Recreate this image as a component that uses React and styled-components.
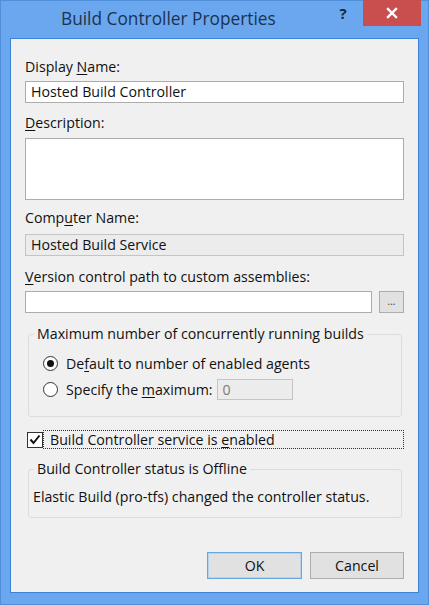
import React from "react";
import styled, { createGlobalStyle } from "styled-components";

const Global = createGlobalStyle`
  html, body { margin: 0; padding: 0; }
  body { background: #6aa7ee; font-family: "Open Sans", "Noto Sans", sans-serif; }
  * { box-sizing: border-box; }
`;

const Frame = styled.div`
  width: 429px;
  height: 605px;
  background: #6aa7ee;
  border: 1px solid #4f8fdc;
  display: flex;
  flex-direction: column;
  padding: 0 9px 11px 9px;
`;

const TitleBar = styled.div`
  height: 37px;
  display: flex;
  align-items: flex-start;
`;

const Title = styled.div`
  margin-left: 51px;
  margin-top: 6px;
  font-size: 17.3px;
  color: #1b3350;
`;

const HelpBtn = styled.div`
  margin-left: auto;
  margin-top: 2px;
  width: 24px;
  font-weight: 700;
  font-size: 15px;
  color: #17263a;
  text-align: center;
`;

const CloseBtn = styled.div`
  margin-left: 8px;
  margin-right: -2px;
  margin-top: -1px;
  width: 58px;
  height: 26px;
  background: #c94e4e;
  display: flex;
  align-items: center;
  justify-content: center;
`;

const Client = styled.div`
  flex: 1;
  background: #f0f0f0;
  border: 1px solid #3e82d6;
  display: flex;
  flex-direction: column;
  padding: 0 14px 13px 14px;
  font-size: 14.2px;
  color: #111;
`;

const Label = styled.div`
  height: 18px;
  line-height: 18px;
  margin-top: ${(p) => p.$mt || 0}px;
  margin-bottom: ${(p) => p.$mb || 5}px;
  white-space: nowrap;
`;

const U = styled.span`
  text-decoration: underline;
  text-underline-offset: 2px;
`;

const TextBox = styled.div`
  height: ${(p) => p.$h || 22}px;
  border: 1px solid ${(p) => (p.$disabled ? "#c4c4c4" : "#acacac")};
  background: ${(p) => (p.$disabled ? "#ececec" : "#fff")};
  padding: 0 5px;
  line-height: 20px;
  flex: ${(p) => (p.$grow ? 1 : "none")};
  width: ${(p) => (p.$w ? p.$w + "px" : "auto")};
  color: ${(p) => (p.$muted ? "#7a7a7a" : "#111")};
  white-space: nowrap;
`;

const Row = styled.div`
  display: flex;
  align-items: center;
  gap: ${(p) => p.$gap || 0}px;
  margin-top: ${(p) => p.$mt || 0}px;
`;

const SmallButton = styled.div`
  width: 25px;
  height: 22px;
  border: 1px solid #adadad;
  background: #e1e1e1;
  font-size: 10px;
  line-height: 18px;
  text-align: center;
  color: #333;
`;

const Group = styled.div`
  margin: ${(p) => p.$mt}px 2px 0 3px;
  border: 1px solid #dcdcdc;
  border-radius: 3px;
  display: flex;
  flex-direction: column;
  align-items: flex-start;
  padding: 0 0 ${(p) => p.$pb}px ${(p) => p.$pl}px;
`;

const Legend = styled.div`
  margin-top: -10px;
  margin-left: ${(p) => p.$ml}px;
  padding: 0 3px;
  background: #f0f0f0;
  height: 18px;
  line-height: 18px;
  white-space: nowrap;
`;

const RadioRow = styled.label`
  display: flex;
  align-items: center;
  height: ${(p) => p.$h || 20}px;
  margin-top: ${(p) => p.$mt}px;
  white-space: nowrap;
`;

const RadioText = styled.span`
  margin-right: 4px;
`;

const RadioCircle = styled.span`
  width: 15px;
  height: 15px;
  border-radius: 50%;
  border: 1px solid #333;
  background: #fff;
  display: flex;
  align-items: center;
  justify-content: center;
  margin-right: 8px;
  &::after {
    content: "";
    width: 7px;
    height: 7px;
    border-radius: 50%;
    background: ${(p) => (p.$on ? "#111" : "transparent")};
  }
`;

const CheckRow = styled.div`
  display: flex;
  align-items: center;
  margin-top: 13px;
  margin-left: 2px;
  height: 19px;
`;

const CheckBox = styled.span`
  width: 16px;
  height: 16px;
  border: 1px solid #333;
  background: #fff;
  display: flex;
  align-items: center;
  justify-content: center;
`;

const FocusText = styled.span`
  flex: 1;
  height: 19px;
  line-height: 17px;
  border: 1px dotted #333;
  padding-left: 6px;
  white-space: nowrap;
`;

const StatusText = styled.div`
  margin-top: 10px;
  margin-left: 4px;
  height: 18px;
  line-height: 18px;
  white-space: nowrap;
`;

const Buttons = styled.div`
  margin-top: auto;
  display: flex;
  justify-content: flex-end;
  gap: 8px;
`;

const Button = styled.div`
  width: ${(p) => p.$w}px;
  height: 27px;
  border: 1px solid ${(p) => (p.$def ? "#6aa6e0" : "#adadad")};
  box-shadow: ${(p) => (p.$def ? "inset 0 0 0 1px #b5d3ef" : "none")};
  background: #e1e1e1;
  display: flex;
  align-items: center;
  justify-content: center;
  color: #111;
`;

export default function App() {
  return (
    <>
      <Global />
      <Frame>
        <TitleBar>
          <Title>Build Controller Properties</Title>
          <HelpBtn>?</HelpBtn>
          <CloseBtn>
            <svg width="12" height="12" viewBox="0 0 12 12">
              <path d="M2 2 L10 10 M10 2 L2 10" stroke="#fff" strokeWidth="2.4" strokeLinecap="square" />
            </svg>
          </CloseBtn>
        </TitleBar>
        <Client>
          <Label $mt={19}>
            Display <U>N</U>ame:
          </Label>
          <TextBox>Hosted Build Controller</TextBox>
          <Label $mt={11} $mb={6}>
            <U>D</U>escription:
          </Label>
          <TextBox $h={62} />
          <Label $mt={9} $mb={7}>
            Comp<U>u</U>ter Name:
          </Label>
          <TextBox $disabled>Hosted Build Service</TextBox>
          <Label $mt={12} $mb={5}>
            <U>V</U>ersion control path to custom assemblies:
          </Label>
          <Row $gap={7}>
            <TextBox $grow />
            <SmallButton>...</SmallButton>
          </Row>
          <Group $mt={21} $pb={16} $pl={14}>
            <Legend $ml={-9}>Maximum number of concurrently running builds</Legend>
            <RadioRow $mt={10}>
              <RadioCircle $on />
              <RadioText>
                De<U>f</U>ault to number of enabled agents
              </RadioText>
            </RadioRow>
            <RadioRow $mt={6} $h={21}>
              <RadioCircle />
              <RadioText>
                Specify the <U>m</U>aximum:
              </RadioText>
              <TextBox $disabled $muted $w={76} $h={21}>0</TextBox>
            </RadioRow>
          </Group>
          <CheckRow>
            <CheckBox>
              <svg width="12" height="11" viewBox="0 0 12 11">
                <path d="M1.5 5.5 L4.5 9 L10.5 1.5" fill="none" stroke="#111" strokeWidth="2" />
              </svg>
            </CheckBox>
            <FocusText>
              Build Controller service is <U>e</U>nabled
            </FocusText>
          </CheckRow>
          <Group $mt={20} $pb={11} $pl={0}>
            <Legend $ml={5}>Build Controller status is Offline</Legend>
            <StatusText>Elastic Build (pro-tfs) changed the controller status.</StatusText>
          </Group>
          <Buttons>
            <Button $w={95} $def>OK</Button>
            <Button $w={94}>Cancel</Button>
          </Buttons>
        </Client>
      </Frame>
    </>
  );
}
